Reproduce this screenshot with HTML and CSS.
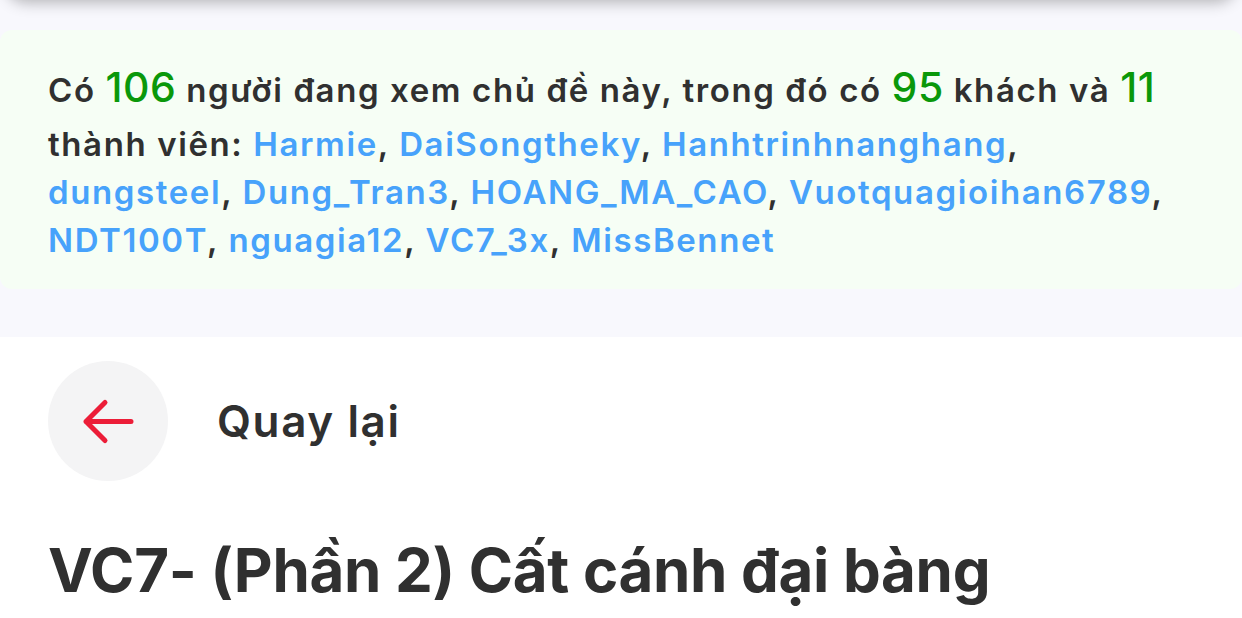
FILE: index.html
```html
<!DOCTYPE html>
<html lang="vi">
<head>
  <meta charset="UTF-8" />
  <meta name="viewport" content="width=device-width, initial-scale=1.0" />
  <title>VC7- (Phần 2) Cất cánh đại bàng</title>
  <link rel="stylesheet" href="styles.css">
</head>
<body>
  <div class="online">
    <div class="header-shadow"></div>
    <div class="online-box">
      Có <span class="count">106</span> người đang xem chủ đề này, trong đó có <span class="count">95</span> khách và <span class="count">11</span>
      thành viên: <a href="#">Harmie</a>, <a href="#">DaiSongtheky</a>, <a href="#">Hanhtrinhnanghang</a>,
      <a href="#">dungsteel</a>, <a href="#">Dung_Tran3</a>, <a href="#">HOANG_MA_CAO</a>, <a href="#">Vuotquagioihan6789</a>,
      <a href="#">NDT100T</a>, <a href="#">nguagia12</a>, <a href="#">VC7_3x</a>, <a href="#">MissBennet</a>
    </div>
  </div>

  <div class="topic">
    <div class="back-row">
      <button class="back-btn">
        <svg width="60" height="60" viewBox="0 0 60 60">
          <path d="M8 30.5H53M8 30.5L27 11.5M8 30.5L27 49.5" fill="none" stroke="#ec1d38" stroke-width="5" stroke-linecap="round" stroke-linejoin="round" />
        </svg>
      </button>
      <span class="back-label">Quay lại</span>
    </div>
    <h1 class="topic-title">VC7- (Phần 2) Cất cánh đại bàng</h1>
  </div>
</body>
</html>
```

FILE: styles.css
```css
body {
  margin: 0;
  font-family: 'Inter', 'Noto Sans', sans-serif;
  color: #303030;
  background: #fff;
  overflow: hidden;
}

.online {
  background: #f8f8fd;
  padding: 30px 0 48px;
  position: relative;
}

/* shadow of the sticky header that sits just above the viewport */
.header-shadow {
  position: absolute;
  left: 6px;
  right: 6px;
  top: -40px;
  height: 40px;
  border-radius: 20px;
  box-shadow: 0 2px 15px rgba(0, 0, 0, 0.3);
  background: #fff;
}

.online-box {
  background: #f6fef5;
  border-radius: 12px;
  padding: 24px 48px 25px;
  font-size: 33px;
  font-weight: 600;
  line-height: 48px;
  letter-spacing: 1.6px;
}

.count {
  color: #0a980a;
  font-size: 41px;
  font-weight: 500;
  line-height: 66px;
  letter-spacing: 0.5px;
}

.online-box a {
  color: #47a2fb;
  text-decoration: none;
}

.topic {
  padding: 24px 48px 0;
}

.back-row {
  display: flex;
  align-items: center;
  gap: 49px;
}

.back-btn {
  width: 120px;
  height: 120px;
  border: none;
  border-radius: 50%;
  background: #f4f4f5;
  display: flex;
  align-items: center;
  justify-content: center;
  padding: 0;
}

.back-label {
  font-size: 44px;
  font-weight: 600;
  letter-spacing: 1.6px;
}

.topic-title {
  margin: 53px 0 0;
  font-size: 60px;
  font-weight: 700;
  line-height: 1.2;
  letter-spacing: -0.3px;
}
```
